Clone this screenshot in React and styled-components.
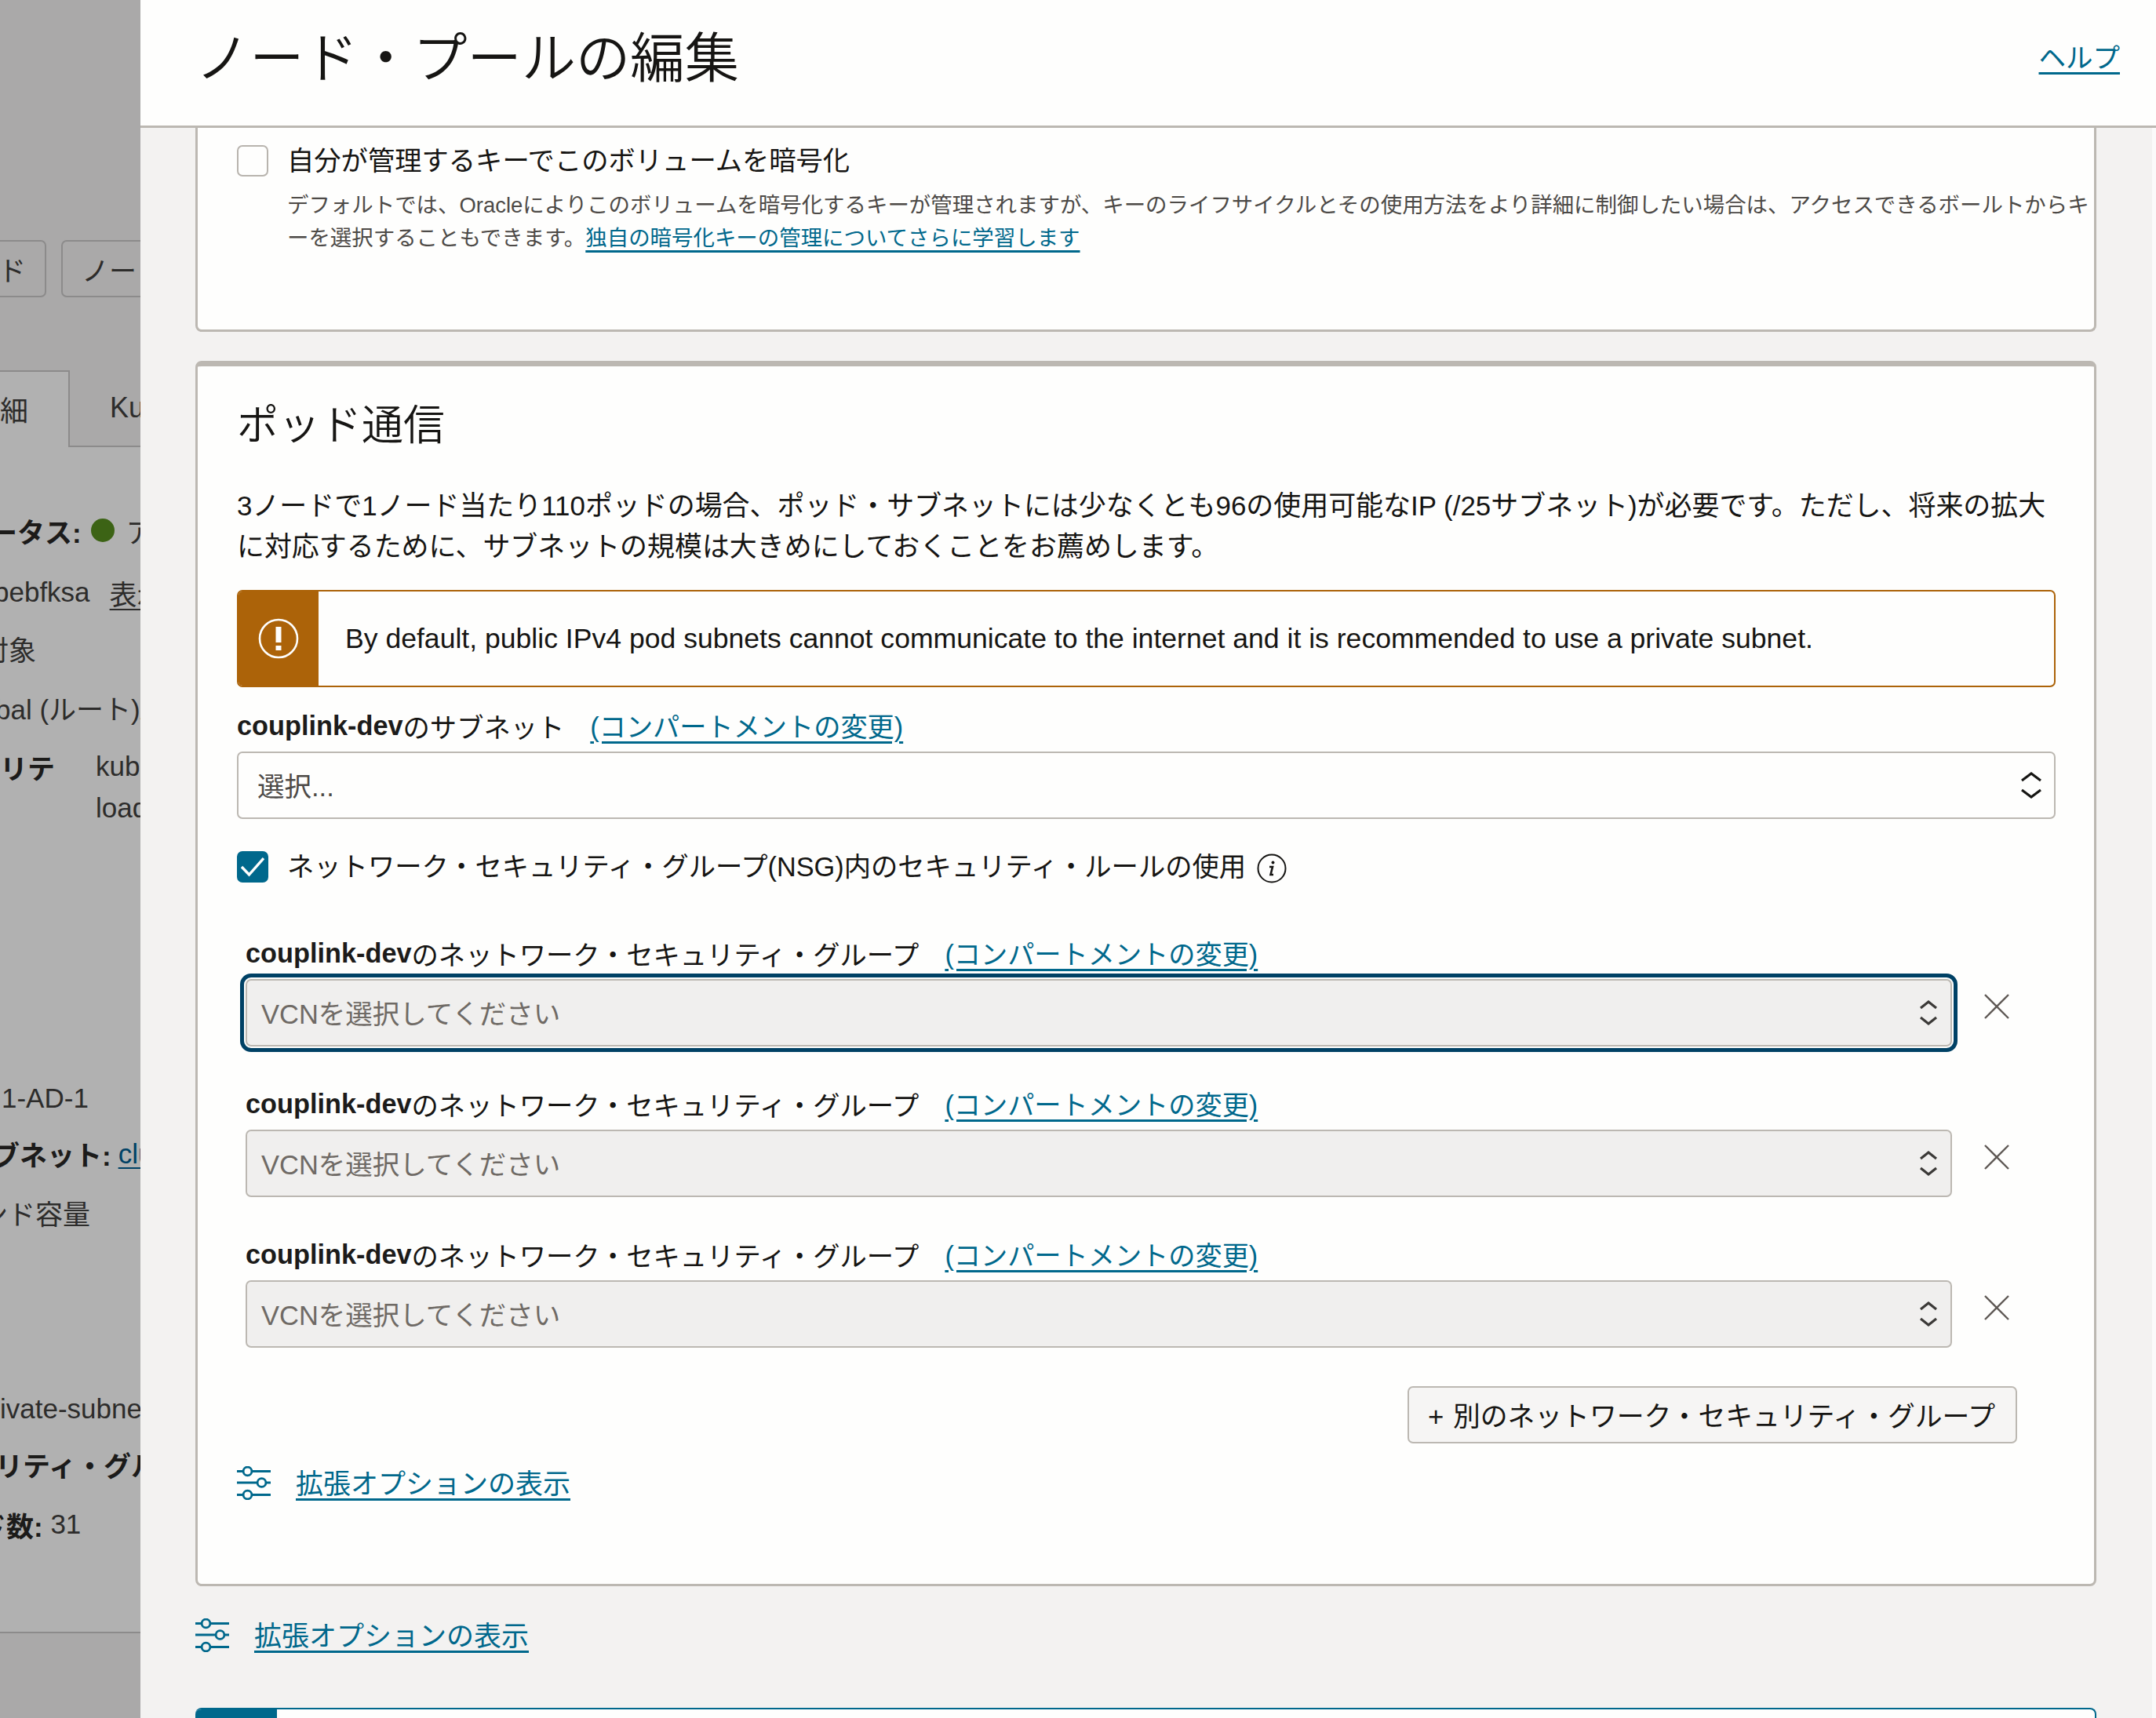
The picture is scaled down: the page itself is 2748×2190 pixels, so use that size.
import React from "react";
import styled, { createGlobalStyle } from "styled-components";

const Global = createGlobalStyle`
  html, body { margin: 0; padding: 0; height: 100%; overflow: hidden; }
  body { font-family: "Liberation Sans", "Noto Sans CJK JP", sans-serif; color: #161513; background: #fff; }
  #root { height: 100%; }
`;

const Page = styled.div`
  display: flex;
  width: 2748px;
  height: 2190px;
  overflow: hidden;
`;

/* ---------- dimmed page behind the drawer ---------- */
const Backdrop = styled.div`
  width: 179px;
  flex: none;
  display: flex;
  flex-direction: column;
  overflow: hidden;
  background: #b1b1b1;
  color: #2d2c2b;
  font-size: 35px;
  white-space: nowrap;
`;
const BackdropTop = styled.div`
  height: 570px;
  flex: none;
  display: flex;
  flex-direction: column;
  padding-top: 306px;
  box-sizing: border-box;
  background: #aaa9a9;
`;
const GhostButtons = styled.div`
  display: flex;
  gap: 19px;
  margin-left: -40px;
  height: 73px;
`;
const GhostButton = styled.div`
  flex: none;
  width: ${(p) => p.$w}px;
  box-sizing: border-box;
  border: 2px solid #8c8b8b;
  border-radius: 7px;
  display: flex;
  align-items: center;
  padding: 0 20px 0 ${(p) => p.$pad}px;
  overflow: hidden;
`;
const TabRow = styled.div`
  display: flex;
  margin-top: 93px;
  height: 98px;
`;
const ActiveTab = styled.div`
  width: 89px;
  flex: none;
  box-sizing: border-box;
  background: #b1b1b1;
  border-top: 2px solid #8c8b8b;
  border-right: 2px solid #8c8b8b;
  display: flex;
  align-items: center;
  font-size: 36px;
  padding-bottom: 2px;
`;
const InactiveTab = styled.div`
  flex: 1;
  box-sizing: border-box;
  border-bottom: 2px solid #8c8b8b;
  padding-left: 51px;
  display: flex;
  align-items: center;
  font-size: 36px;
  overflow: hidden;
`;
const Details = styled.div`
  display: flex;
  flex-direction: column;
  padding-top: 69px;
  height: 1512px;
  box-sizing: border-box;
  border-bottom: 2px solid #8c8b8b;
  flex: none;
`;
const DetailRow = styled.div`
  height: 74px;
  flex: none;
  display: flex;
  align-items: center;
  margin-top: ${(p) => p.$gap || 0}px;
  margin-left: ${(p) => p.$shift || 0}px;
`;
const BoldText = styled.span`
  font-weight: 700;
  color: #1c1b1a;
`;
const Dot = styled.span`
  width: 30px;
  height: 30px;
  border-radius: 50%;
  background: #3c6315;
  flex: none;
  margin: 0 15px 0 12px;
`;
const GhostValue = styled.span`
  margin-left: ${(p) => p.$gap || 0}px;
`;
const GhostLink = styled(GhostValue)`
  text-decoration: underline;
  text-decoration-thickness: 2px;
  text-underline-offset: 5px;
  color: ${(p) => p.$color || "inherit"};
`;
const BackdropFoot = styled.div`
  flex: 1;
  background: #aaa9a9;
`;

/* ---------- drawer ---------- */
const Drawer = styled.div`
  flex: 1;
  min-width: 0;
  display: flex;
  flex-direction: column;
  background: #f3f2f1;
`;
const DrawerHeader = styled.header`
  height: 163px;
  flex: none;
  box-sizing: border-box;
  background: #fefefd;
  border-bottom: 3px solid #bcb8b2;
  display: flex;
  align-items: flex-start;
  justify-content: space-between;
  padding: 0 46px 0 70px;
`;
const Title = styled.h1`
  margin: 33px 0 0;
  font-size: 69.3px;
  line-height: 84px;
  font-weight: 350;
  color: #161513;
`;
const Link = styled.a`
  color: #00688c;
  text-decoration: underline;
  text-decoration-thickness: 3px;
  text-underline-offset: 6px;
  white-space: nowrap;
`;
const HelpLink = styled(Link)`
  font-size: 34.5px;
  line-height: 44px;
  margin-top: 52px;
`;
const DrawerBody = styled.div`
  flex: 1;
  min-height: 0;
  display: flex;
  overflow: hidden;
`;
const ScrollArea = styled.div`
  flex: 1;
  min-width: 0;
  display: flex;
  flex-direction: column;
  padding: 0 71px 0 70px;
`;
const ScrollTrack = styled.div`
  width: 5px;
  flex: none;
  background: #fbfafa;
`;
const Card = styled.section`
  box-sizing: border-box;
  flex: none;
  background: #fefefd;
  border: 3px solid #bcb8b2;
  border-radius: 8px;
  padding: 0 49px 0 50px;
`;
const KeyCard = styled(Card)`
  height: 260px;
  border-top: none;
  border-radius: 0 0 8px 8px;
  padding-top: 22px;
`;
const PodCard = styled(Card)`
  margin-top: 37px;
  border-top-width: 7px;
  padding-top: 44px;
  padding-bottom: 106px;
  display: flex;
  flex-direction: column;
`;
const CheckRow = styled.label`
  display: flex;
  align-items: center;
  gap: 24px;
  font-size: 34.3px;
  line-height: 40px;
  white-space: nowrap;
  margin-top: ${(p) => p.$gap || 0}px;
`;
const CheckBox = styled.span`
  width: 40px;
  height: 40px;
  flex: none;
  box-sizing: border-box;
  border-radius: 7px;
  border: 2px solid ${(p) => (p.$checked ? "#00688c" : "#b8b4ae")};
  background: ${(p) => (p.$checked ? "#00688c" : "#fefefd")};
  display: flex;
  align-items: center;
  justify-content: center;
`;
const HelpText = styled.p`
  margin: 16px 0 0 64px;
  font-size: 27.45px;
  line-height: 42px;
  color: #4d4a47;
  white-space: nowrap;
`;
const PodTitle = styled.h2`
  margin: 0;
  font-size: 53px;
  line-height: 64px;
  font-weight: 350;
`;
const Paragraph = styled.p`
  margin: 44px 0 0;
  font-size: 34.95px;
  line-height: 52px;
  white-space: nowrap;
`;
const Notice = styled.div`
  margin-top: 29px;
  height: 124px;
  flex: none;
  box-sizing: border-box;
  border: 2.5px solid #ac6309;
  border-radius: 7px;
  display: flex;
  align-items: center;
  overflow: hidden;
`;
const NoticeIcon = styled.div`
  width: 102px;
  align-self: stretch;
  flex: none;
  background: #ac6309;
  display: flex;
  align-items: center;
  justify-content: center;
`;
const NoticeText = styled.span`
  margin-left: 34px;
  font-size: 35.6px;
  white-space: nowrap;
`;
const FieldLabel = styled.div`
  height: 44px;
  flex: none;
  display: flex;
  align-items: center;
  font-size: 34.3px;
  white-space: nowrap;
  margin-top: ${(p) => p.$gap || 0}px;
`;
const FieldLink = styled(Link)`
  margin-left: ${(p) => p.$gap}px;
  margin-top: -2px;
  font-size: 34.2px;
`;
const Select = styled.div`
  box-sizing: border-box;
  height: 86px;
  flex: ${(p) => (p.$muted ? "1" : "none")};
  margin-top: ${(p) => (p.$muted ? 0 : 11)}px;
  border: 2.5px solid #bcb8b2;
  border-radius: 7px;
  background: ${(p) => (p.$muted ? "#f0efee" : "#fefefd")};
  color: ${(p) => (p.$muted ? "#6f6a65" : "#4d4a47")};
  display: flex;
  align-items: center;
  justify-content: space-between;
  font-size: 34.5px;
  padding: 0 ${(p) => (p.$muted ? 15 : 16)}px 0 ${(p) => (p.$muted ? 18 : 24)}px;
  ${(p) => p.$focused && "outline: 5.5px solid #004165; outline-offset: 2px;"}
`;
const SelectLabel = styled.span`
  margin-top: ${(p) => (p.$muted ? -2 : -3)}px;
`;
const Groups = styled.div`
  display: flex;
  flex-direction: column;
  padding: 0 49px 0 11px;
`;
const Group = styled.div`
  margin-top: ${(p) => (p.$first ? 67 : 51.5)}px;
`;
const GroupField = styled.div`
  display: flex;
  align-items: center;
  margin-top: 10.5px;
`;
const RemoveIcon = styled.svg`
  width: 32px;
  height: 32px;
  flex: none;
  margin: 0 10px 16px 41px;
`;
const AddButton = styled.button`
  align-self: flex-end;
  margin-top: 49px;
  height: 73px;
  box-sizing: border-box;
  padding: 0 26px 0 24px;
  background: #f6f5f4;
  border: 2.5px solid #bcb8b2;
  border-radius: 7px;
  font-family: inherit;
  font-size: 34.8px;
  word-spacing: 2px;
  color: #161513;
  white-space: nowrap;
`;
const AdvancedRow = styled.div`
  display: flex;
  align-items: center;
  gap: 31px;
  height: 44px;
  flex: none;
  font-size: 35px;
  margin-top: ${(p) => p.$gap}px;
`;
const AdvancedLink = styled(Link)`
  margin-top: -4px;
`;
const InfoIcon = styled.svg`
  width: 38px;
  height: 38px;
  flex: none;
  margin: 5px 0 0 -10px;
`;
const NextCard = styled.section`
  margin-top: 71px;
  height: 60px;
  flex: none;
  box-sizing: border-box;
  background: #fefefd;
  border-top: 2.5px solid #00688c;
  border-right: 2.5px solid #00688c;
  border-radius: 8px 8px 0 0;
  overflow: hidden;
`;
const NextCardTab = styled.div`
  width: 104px;
  height: 100%;
  background: #00688c;
`;

const Chevrons = ({ muted }) => (
  <svg width="26" height="38" viewBox="0 0 26 38" fill="none" stroke={muted ? "#3b3937" : "#161513"} strokeWidth="3.2">
    <path d={muted ? "M3 13 L13 5 L23 13" : "M1 13 L13 4 L25 13"} />
    <path d={muted ? "M3 25 L13 33 L23 25" : "M1 25 L13 34 L25 25"} />
  </svg>
);

const Sliders = () => (
  <svg width="44" height="43" viewBox="0 0 44 43" fill="none" stroke="#00688c" strokeWidth="2.8">
    <path d="M0 6.5H8M19 6.5H43" />
    <circle cx="13.5" cy="6.5" r="5.4" />
    <path d="M0 21H26M37 21H43" />
    <circle cx="31.5" cy="21" r="5.4" />
    <path d="M0 36.5H8M19 36.5H43" />
    <circle cx="13.5" cy="36.5" r="5.4" />
  </svg>
);

const Remove = () => (
  <RemoveIcon viewBox="0 0 32 32" fill="none" stroke="#5f5955" strokeWidth="2.4">
    <path d="M1 1L31 31M31 1L1 31" />
  </RemoveIcon>
);

const NsgGroup = ({ first, focused }) => (
  <Group $first={first}>
    <FieldLabel>
      <BoldText>couplink-dev</BoldText>のネットワーク・セキュリティ・グループ
      <FieldLink $gap={33} href="#">(コンパートメントの変更)</FieldLink>
    </FieldLabel>
    <GroupField>
      <Select $muted $focused={focused}>
        <SelectLabel $muted>VCNを選択してください</SelectLabel>
        <Chevrons muted />
      </Select>
      <Remove />
    </GroupField>
  </Group>
);

export default function App() {
  return (
    <Page>
      <Global />
      <Backdrop>
        <BackdropTop>
          <GhostButtons>
            <GhostButton $w={99} $pad={36}>ド</GhostButton>
            <GhostButton $w={160} $pad={24}>ノード</GhostButton>
          </GhostButtons>
          <TabRow>
            <ActiveTab>細</ActiveTab>
            <InactiveTab>Kubernetes</InactiveTab>
          </TabRow>
        </BackdropTop>
        <Details>
          <DetailRow $shift={-13}>
            <BoldText>ータス:</BoldText>
            <Dot />
            アクティブ
          </DetailRow>
          <DetailRow $gap={5} $shift={-8}>
            pebfksa<GhostLink $gap={25}>表示</GhostLink>
          </DetailRow>
          <DetailRow $gap={-3} $shift={-24}>対象</DetailRow>
          <DetailRow $gap={1} $shift={-6}>bal (ルート)/</DetailRow>
          <DetailRow $gap={2}>
            <BoldText>リテ</BoldText>
            <GhostValue $gap={52}>kubernetes</GhostValue>
          </DetailRow>
          <DetailRow $gap={-21} $shift={122}>loadbalancer</DetailRow>
          <DetailRow $gap={296} $shift={2}>1-AD-1</DetailRow>
          <DetailRow $gap={-3.5} $shift={-10}>
            <BoldText>ブネット:</BoldText>
            <GhostLink $color="#004165" $gap={9}>cluster</GhostLink>
          </DetailRow>
          <DetailRow $gap={1} $shift={-25}>ンド容量</DetailRow>
          <DetailRow $gap={176.5}>ivate-subnet</DetailRow>
          <DetailRow $gap={-3.5} $shift={-6}><BoldText>リティ・グループ</BoldText></DetailRow>
          <DetailRow $gap={2.5} $shift={-27}>
            <BoldText>ド数:</BoldText>&nbsp;31
          </DetailRow>
        </Details>
        <BackdropFoot />
      </Backdrop>

      <Drawer>
        <DrawerHeader>
          <Title>ノード・プールの編集</Title>
          <HelpLink href="#">ヘルプ</HelpLink>
        </DrawerHeader>
        <DrawerBody>
          <ScrollArea>
            <KeyCard>
              <CheckRow>
                <CheckBox />
                自分が管理するキーでこのボリュームを暗号化
              </CheckRow>
              <HelpText>
                デフォルトでは、Oracleによりこのボリュームを暗号化するキーが管理されますが、キーのライフサイクルとその使用方法をより詳細に制御したい場合は、アクセスできるボールトからキ
                <br />
                ーを選択することもできます。
                <Link href="#">独自の暗号化キーの管理についてさらに学習します</Link>
              </HelpText>
            </KeyCard>

            <PodCard>
              <PodTitle>ポッド通信</PodTitle>
              <Paragraph>
                3ノードで1ノード当たり110ポッドの場合、ポッド・サブネットには少なくとも96の使用可能なIP (/25サブネット)が必要です。ただし、将来の拡大
                <br />
                に対応するために、サブネットの規模は大きめにしておくことをお薦めします。
              </Paragraph>
              <Notice>
                <NoticeIcon>
                  <svg width="52" height="52" viewBox="0 0 52 52" fill="none">
                    <circle cx="26" cy="26" r="24" stroke="#fefefd" strokeWidth="2.6" />
                    <rect x="22.5" y="11" width="7" height="20" fill="#fefefd" />
                    <rect x="22.5" y="35" width="7" height="6" fill="#fefefd" />
                  </svg>
                </NoticeIcon>
                <NoticeText>
                  By default, public IPv4 pod subnets cannot communicate to the internet and it is recommended to use a private subnet.
                </NoticeText>
              </Notice>
              <FieldLabel $gap={27}>
                <BoldText>couplink-dev</BoldText>のサブネット
                <FieldLink $gap={33} href="#">(コンパートメントの変更)</FieldLink>
              </FieldLabel>
              <Select>
                <SelectLabel>選択...</SelectLabel>
                <Chevrons />
              </Select>
              <CheckRow $gap={39}>
                <CheckBox $checked>
                  <svg width="30" height="26" viewBox="0 0 30 26" fill="none" stroke="#fefefd" strokeWidth="3.4">
                    <path d="M1 13L10.5 23L29 2" />
                  </svg>
                </CheckBox>
                ネットワーク・セキュリティ・グループ(NSG)内のセキュリティ・ルールの使用
                <InfoIcon viewBox="0 0 38 38" fill="none" stroke="#161513">
                  <circle cx="19" cy="19" r="17.5" strokeWidth="2" />
                  <path d="M16 17H20L17.5 27H21" strokeWidth="2.6" />
                  <circle cx="20.5" cy="11.5" r="2" fill="#161513" stroke="none" />
                </InfoIcon>
              </CheckRow>
              <Groups>
                <NsgGroup first focused />
                <NsgGroup />
                <NsgGroup />
                <AddButton>+ 別のネットワーク・セキュリティ・グループ</AddButton>
              </Groups>
              <AdvancedRow $gap={29}>
                <Sliders />
                <AdvancedLink href="#">拡張オプションの表示</AdvancedLink>
              </AdvancedRow>
            </PodCard>

            <AdvancedRow $gap={40.5}>
              <Sliders />
              <AdvancedLink href="#">拡張オプションの表示</AdvancedLink>
            </AdvancedRow>

            <NextCard>
              <NextCardTab />
            </NextCard>
          </ScrollArea>
          <ScrollTrack />
        </DrawerBody>
      </Drawer>
    </Page>
  );
}
